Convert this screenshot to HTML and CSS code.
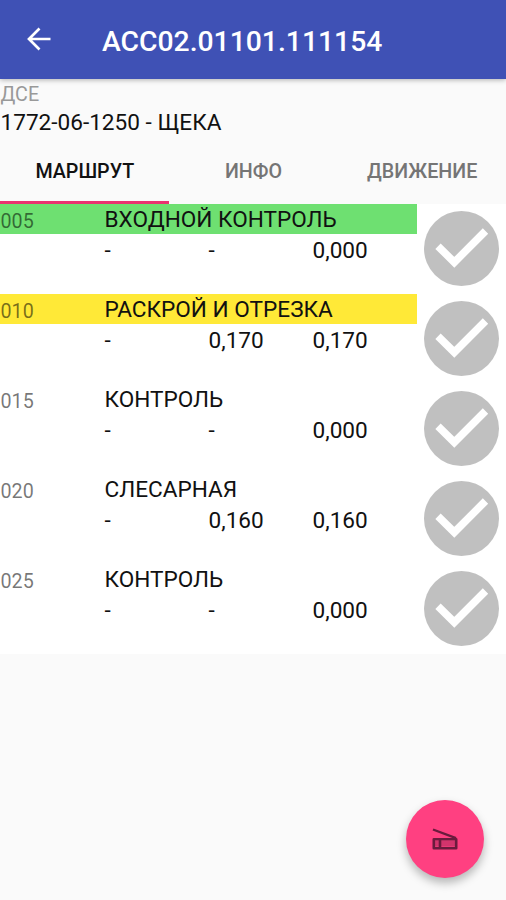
FILE: index.html
```
<!DOCTYPE html>
<html lang="ru">
<head>
    <meta charset="UTF-8">
    <meta name="viewport" content="width=device-width, initial-scale=1.0">
    <title>ACC02.01101.111154</title>
    <link rel="stylesheet" href="styles.css">
</head>
<body>
    <svg class="symbols" width="0" height="0">
        <symbol id="check" viewBox="0 0 75 75">
            <circle cx="37.5" cy="37.5" r="37.5" fill="#c0c0c0"/>
            <path d="M14 35.2L30.3 51.3L61.5 20" fill="none" stroke="#fff" stroke-width="7.6"/>
        </symbol>
    </svg>
    <header class="app-bar">
        <button class="back" aria-label="Назад">
            <svg width="24" height="24" viewBox="0 0 24 24"><path d="M12.5 1.5L2 12L12.5 22.5M2 12H23.5" fill="none" stroke="#fff" stroke-width="2.7"/></svg>
        </button>
        <h1>ACC02.01101.111154</h1>
    </header>
    <section class="item">
        <div class="item-label">ДСЕ</div>
        <div class="item-name">1772-06-1250 - ЩЕКА</div>
    </section>
    <nav class="tabs">
        <a class="tab active">МАРШРУТ</a>
        <a class="tab">ИНФО</a>
        <a class="tab">ДВИЖЕНИЕ</a>
    </nav>
    <main class="route">
        <div class="row">
            <div class="operation">
                <div class="heading done"><span class="number">005</span><span class="name">ВХОДНОЙ КОНТРОЛЬ</span></div>
                <div class="values"><span>-</span><span>-</span><span>0,000</span></div>
            </div>
            <svg class="check"><use href="#check"/></svg>
        </div>
        <div class="row">
            <div class="operation">
                <div class="heading current"><span class="number">010</span><span class="name">РАСКРОЙ И ОТРЕЗКА</span></div>
                <div class="values"><span>-</span><span>0,170</span><span>0,170</span></div>
            </div>
            <svg class="check"><use href="#check"/></svg>
        </div>
        <div class="row">
            <div class="operation">
                <div class="heading"><span class="number">015</span><span class="name">КОНТРОЛЬ</span></div>
                <div class="values"><span>-</span><span>-</span><span>0,000</span></div>
            </div>
            <svg class="check"><use href="#check"/></svg>
        </div>
        <div class="row">
            <div class="operation">
                <div class="heading"><span class="number">020</span><span class="name">СЛЕСАРНАЯ</span></div>
                <div class="values"><span>-</span><span>0,160</span><span>0,160</span></div>
            </div>
            <svg class="check"><use href="#check"/></svg>
        </div>
        <div class="row">
            <div class="operation">
                <div class="heading"><span class="number">025</span><span class="name">КОНТРОЛЬ</span></div>
                <div class="values"><span>-</span><span>-</span><span>0,000</span></div>
            </div>
            <svg class="check"><use href="#check"/></svg>
        </div>
    </main>
    <button class="fab" aria-label="Сканировать">
        <svg width="26" height="22" viewBox="0 0 26 22">
            <path d="M1 1.5L24 10.2" fill="none" stroke="#6b1b3d" stroke-width="2.4"/>
            <path d="M1.8 11.2H24.2V20.2H1.8ZM8 11V20" fill="none" stroke="#6b1b3d" stroke-width="2.6" stroke-linejoin="round"/>
            <path d="M3 13H23V18.5H3Z" fill="#6b1b3d" opacity="0.3"/>
        </svg>
    </button>
</body>
</html>
```

FILE: styles.css
```
:root {
    --primary: #3f51b5;
    --accent: #ff4081;
    --page-bg: #fafafa;
}

* {
    box-sizing: border-box;
}
body {
    margin: 0;
    height: 900px;
    overflow: hidden;
    background: var(--page-bg);
    font-family: Roboto, sans-serif;
    font-size: 22.6px;
    color: #111;
}
button {
    border: none;
    padding: 0;
}
.symbols {
    position: absolute;
}
.app-bar {
    display: flex;
    align-items: center;
    height: 79px;
    padding-left: 27px;
    background: var(--primary);
    box-shadow: 0 1px 5px rgba(0, 0, 0, 0.3);
    color: #fff;
}
.app-bar h1 {
    margin: 3px 0 0 51px;
    font-size: 28.3px;
    font-weight: 500;
}
.back {
    height: 24px;
    margin-top: -1px;
    background: none;
}
.item {
    height: 60px;
    padding-left: 0.5px;
}
.item-label {
    height: 28px;
    font-size: 19.7px;
    line-height: 31px;
    color: #999;
}
.item-name {
    line-height: 32px;
}
.tabs {
    display: grid;
    grid-template-columns: repeat(3, 1fr);
    height: 65px;
}
.tab {
    height: 65px;
    padding: 1px 0 0 1px;
    border-bottom: 3px solid transparent;
    font-size: 19.7px;
    font-weight: 500;
    line-height: 64px;
    text-align: center;
    color: #757575;
}
.tab.active {
    border-bottom-color: #e93370;
    color: #111;
}
.row {
    display: flex;
    height: 90px;
    background: #fff;
}
.operation {
    width: 417px;
}
.heading {
    display: flex;
    height: 30px;
    padding-left: 0.5px;
    line-height: 31px;
}
.heading.done {
    background: #6ee071;
}
.heading.current {
    background: #ffe937;
}
.number {
    width: 104px;
    font-size: 19.7px;
    line-height: 35px;
    color: rgba(0, 0, 0, 0.54);
}
.values {
    display: grid;
    grid-template-columns: repeat(3, 104px);
    padding-left: 104.5px;
    line-height: 34px;
}
.check {
    width: 75px;
    height: 75px;
    margin: 7px 0 0 7px;
}
/* stays over the list */
.fab {
    position: absolute;
    right: 22px;
    bottom: 22px;
    display: flex;
    align-items: center;
    justify-content: center;
    width: 78px;
    height: 78px;
    border-radius: 50%;
    background: var(--accent);
    box-shadow: 0 5px 10px rgba(0, 0, 0, 0.28);
}
```
